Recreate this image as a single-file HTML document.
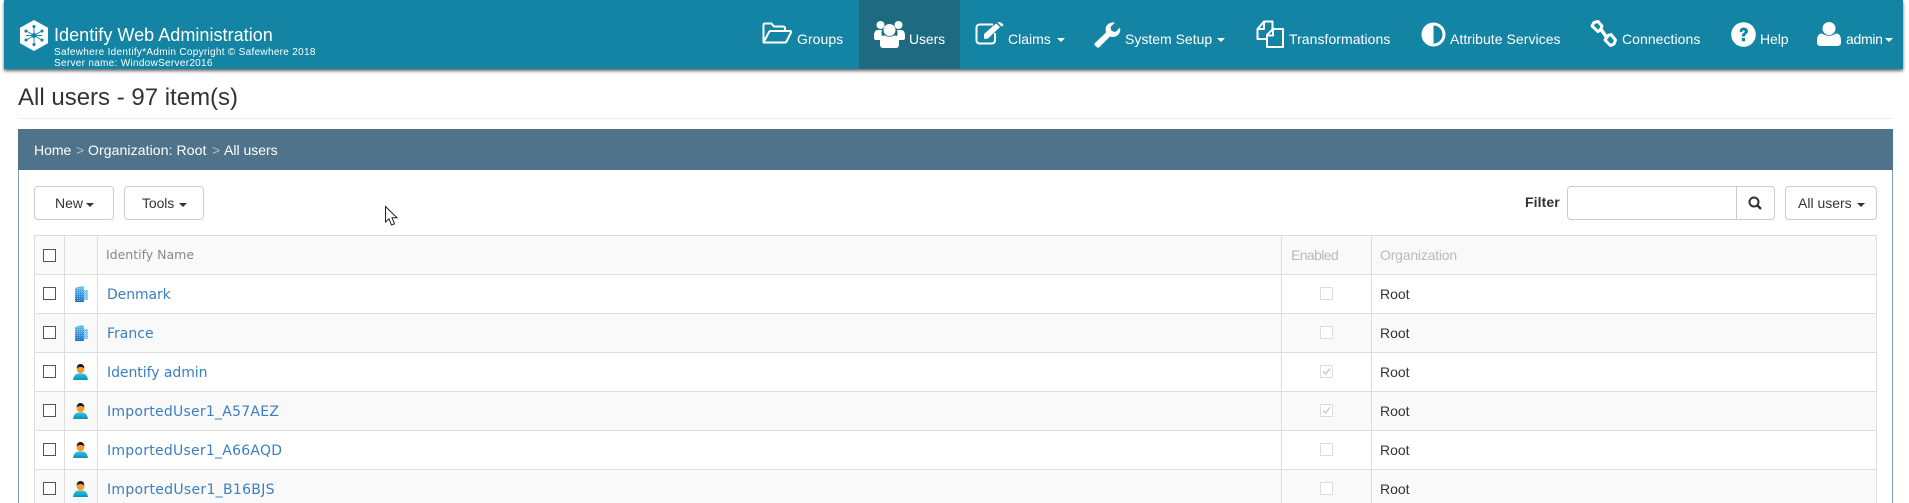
<!DOCTYPE html>
<html><head><meta charset="utf-8"><style>
html,body{margin:0;padding:0;background:#fff;width:1909px;height:503px;overflow:hidden;font-family:"Liberation Sans",Arial,sans-serif;color:#333}
.a{position:absolute;white-space:nowrap}
#nav{position:absolute;left:4px;top:0;width:1899px;height:69px;background:#1384a3;box-shadow:0 2px 3px rgba(0,0,0,.6)}
.n{position:absolute;top:30px;font-size:14px;line-height:18px;color:#fff;white-space:nowrap}
.ic{position:absolute;overflow:visible}
.car{position:absolute;width:0;height:0;border-left:4px solid transparent;border-right:4px solid transparent;border-top:4px solid currentColor}
.btn{position:absolute;box-sizing:border-box;border:1px solid #ccc;border-radius:4px;background:#fff;height:34px;top:186px}
.line{position:absolute;background:#ddd}
.cb{position:absolute;box-sizing:border-box;width:13px;height:13px;border:1px solid #555;background:#fff}
.cd{position:absolute;box-sizing:border-box;width:13px;height:13px;border:1px solid #ddd;background:#fff}
.lk{position:absolute;left:107px;font:14px/18px "DejaVu Sans",Verdana,sans-serif;letter-spacing:.25px;color:#3a7fc1;white-space:nowrap}
.rt{position:absolute;left:1380px;font-size:14px;line-height:18px;color:#333}
</style></head><body>
<div id="nav"></div>
<svg class="ic" style="left:19px;top:20px" width="30" height="31" viewBox="0 0 30 31"><path d="M15 0.5L28.5 8V23L15 30.5L1.5 23V8Z" fill="#fff" stroke="#fff" stroke-linejoin="round"/><g stroke="#1384a3" stroke-width="1.1" fill="#1384a3"><path d="M15 6V25M6.5 10.5L23.5 20.5M6.5 20.5L23.5 10.5M7 15.5H23" fill="none" stroke-width=".9"/><circle cx="15" cy="15.5" r="2"/><circle cx="15" cy="6.5" r="1"/><circle cx="15" cy="24.5" r="1"/><circle cx="7" cy="11" r="1"/><circle cx="23" cy="11" r="1"/><circle cx="7" cy="20" r="1"/><circle cx="23" cy="20" r="1"/></g></svg>
<div class="a" style="left:54px;top:24px;font-size:18px;line-height:22px;color:#fff;letter-spacing:.04px">Identify Web Administration</div>
<div class="a" style="left:54px;top:47px;font-size:10px;line-height:11px;color:#fff;letter-spacing:.3px">Safewhere Identify*Admin Copyright © Safewhere 2018<br>Server name: WindowServer2016</div>

<div class="a" style="left:859px;top:0;width:101px;height:69px;background:#1e6a80"></div>

<svg class="ic" style="left:762px;top:22px" width="30" height="22" viewBox="0 0 30 22" fill="none" stroke="#fff" stroke-width="2" stroke-linejoin="round"><path d="M1.5 20V3Q1.5 1.5 3 1.5H9.5L12 4.5H21Q23 4.5 23 6.5V9"/><path d="M1.5 20.5L7 10Q7.5 9 9 9H28Q29.5 9 29 10.5L24.5 19.5Q24 20.5 23 20.5Z"/></svg>
<div class="n" style="left:797px;letter-spacing:.05px">Groups</div>

<svg class="ic" style="left:874px;top:20px" width="31" height="28" viewBox="0 0 31 28" fill="#fff"><circle cx="6.5" cy="5" r="4"/><circle cx="24.5" cy="5" r="4"/><path d="M0 16Q0 10 4 10H8Q7 13 8 16L7.5 20H2Q0 20 0 18Z"/><path d="M31 16Q31 10 27 10H23Q24 13 23 16L23.5 20H29Q31 20 31 18Z"/><circle cx="15.5" cy="10" r="6"/><path d="M6 22Q6 15 11 15.5Q15.500 18 20 15.500Q25 15 25 22V24.500Q25 28 22 28H9Q6 28 6 24.500Z"/></svg>
<div class="n" style="left:909px;letter-spacing:-.1px">Users</div>

<svg class="ic" style="left:975px;top:22px" width="29" height="23" viewBox="0 0 29 23"><path d="M20 11V18Q20 21.500 16.500 21.500H5Q1.500 21.500 1.500 18V6Q1.500 2.500 5 2.500H18" fill="none" stroke="#fff" stroke-width="2"/><path d="M9 12L21 1.500L25 5L13 16.500L9 17Z" fill="#fff"/><path d="M22.500 .5L24 0Q28 1 28.500 3.500L26.500 4.500Z" fill="#fff"/></svg>
<div class="n" style="left:1008px">Claims</div><div class="car" style="left:1057px;top:38px;color:#fff"></div>

<svg class="ic" style="left:1094px;top:22px" width="27" height="26" viewBox="0 0 27 26" fill="#fff"><path d="M1 21L12 10.500Q10.500 4 15 1.500Q18 0 21 .5L16.500 5L17.500 9L21.500 10L26 5.500Q27 9 24.500 12.500Q21 16 16 14.500L5 25.500Q3.500 26 2 24.500L.5 23Q0 22 1 21Z"/></svg>
<div class="n" style="left:1125px">System Setup</div><div class="car" style="left:1217px;top:38px;color:#fff"></div>

<svg class="ic" style="left:1256px;top:20px" width="28" height="28" viewBox="0 0 28 28" fill="none" stroke="#fff" stroke-width="2" stroke-linejoin="round"><path d="M10 19H1.500V9L8 1.500H16.500V9"/><path d="M8 2V9H2"/><path d="M11 27V15L17 9H27V27Z"/><path d="M17 9.500V15.500H11.500"/></svg>
<div class="n" style="left:1289px;letter-spacing:.05px">Transformations</div>

<svg class="ic" style="left:1421px;top:22px" width="25" height="25" viewBox="0 0 25 25"><circle cx="12.500" cy="12.500" r="12" fill="#fff"/><path d="M12.500 3.500A9 9 0 0 1 12.500 21.500Z" fill="#1384a3"/></svg>
<div class="n" style="left:1450px;letter-spacing:.05px">Attribute Services</div>

<svg class="ic" style="left:1590px;top:20px" width="27" height="27" viewBox="0 0 27 27" fill="none" stroke="#fff" stroke-width="3"><path d="M4 2.500L8 1.500L12 6L10.500 10L8 11.500L2 6Z" stroke-linejoin="round"/><path d="M18 15.500L21 14.500L25.500 20L24 24L20.500 25.500L15 20Z" stroke-linejoin="round"/><path d="M10 8L17.500 18.500" stroke-width="3.500"/></svg>
<div class="n" style="left:1622px;letter-spacing:.05px">Connections</div>

<svg class="ic" style="left:1731px;top:22px" width="25" height="25" viewBox="0 0 25 25"><circle cx="12.500" cy="12.500" r="12.300" fill="#fff"/><path d="M8.500 9.500Q9 5.500 12.800 5.500Q17 5.800 17 9.300Q17 11.300 14.800 12.500Q14 13 14 14.500H10.800Q10.800 11.800 12.800 10.800Q13.800 10.300 13.700 9.300Q13.300 8.300 12.500 8.400Q11.500 8.500 11 10.500Z" fill="#1384a3"/><rect x="10.800" y="16" width="3.200" height="3.300" fill="#1384a3"/></svg>
<div class="n" style="left:1760px;letter-spacing:-.1px">Help</div>

<svg class="ic" style="left:1817px;top:22px" width="24" height="24" viewBox="0 0 24 24" fill="#fff"><circle cx="12" cy="6.500" r="6.500"/><path d="M0 19Q0 11.500 5 11.500Q12 16 19 11.500Q24 11.500 24 19V20.500Q24 24 20.500 24H3.500Q0 24 0 20.500Z"/></svg>
<div class="n" style="left:1846px;letter-spacing:-.3px">admin</div><div class="car" style="left:1885px;top:38px;color:#fff"></div>

<div class="a" style="left:18px;top:84px;font-size:24px;line-height:28px;color:#333">All users - 97 item(s)</div>
<div class="a" style="left:18px;top:118px;width:1875px;height:1px;background:#eee"></div>

<div class="a" style="left:18px;top:129px;width:1875px;height:374px;box-sizing:border-box;border:1px solid #7e9bb0;border-bottom:0;background:#fff"></div>
<div class="a" style="left:18px;top:129px;width:1875px;height:41px;background:#4f738a"></div>
<div class="a" style="left:34px;top:141px;font-size:14px;line-height:18px;color:#fff">Home</div>
<div class="a" style="left:76px;top:141px;font-size:14px;line-height:18px;color:#bbb">&gt;</div>
<div class="a" style="left:88px;top:141px;font-size:14px;line-height:18px;color:#fff;letter-spacing:.1px">Organization: Root</div>
<div class="a" style="left:212px;top:141px;font-size:14px;line-height:18px;color:#bbb">&gt;</div>
<div class="a" style="left:224px;top:141px;font-size:14px;line-height:18px;color:#fff">All users</div>

<div class="btn" style="left:34px;width:80px"></div>
<div class="a" style="left:55px;top:194px;font-size:14px;line-height:18px">New</div><div class="car" style="left:86px;top:203px;color:#333"></div>
<div class="btn" style="left:124px;width:80px"></div>
<div class="a" style="left:142px;top:194px;font-size:14px;line-height:18px;letter-spacing:-.1px">Tools</div><div class="car" style="left:179px;top:203px;color:#333"></div>

<svg class="ic" style="left:385px;top:206px" width="13" height="20" viewBox="0 0 13 20"><path d="M.5.500V16L4 12.800L6.500 19L9.500 17.800L7 11.800H12Z" fill="#fff" stroke="#222" stroke-width="1"/></svg>

<div class="a" style="left:1525px;top:193px;font-size:14px;line-height:18px;font-weight:bold;letter-spacing:.1px">Filter</div>
<div class="btn" style="left:1567px;width:208px"></div>
<div class="a" style="left:1736px;top:187px;width:1px;height:32px;background:#ccc"></div>
<svg class="ic" style="left:1748px;top:196px" width="14" height="14" viewBox="0 0 14 14" fill="none" stroke="#333" stroke-width="2"><circle cx="6" cy="6" r="4.500"/><path d="M9.500 9.500L13 13" stroke-width="2.500"/></svg>
<div class="btn" style="left:1785px;width:92px"></div>
<div class="a" style="left:1798px;top:194px;font-size:14px;line-height:18px">All users</div><div class="car" style="left:1857px;top:203px;color:#333"></div>

<!-- table backgrounds -->
<div class="a" style="left:34px;top:235px;width:1843px;height:39px;background:#f9f9f9"></div>
<div class="a" style="left:34px;top:313px;width:1843px;height:39px;background:#f9f9f9"></div>
<div class="a" style="left:34px;top:391px;width:1843px;height:39px;background:#f9f9f9"></div>
<div class="a" style="left:34px;top:469px;width:1843px;height:34px;background:#f9f9f9"></div>
<!-- horizontal lines -->
<div class="line" style="left:34px;top:235px;width:1843px;height:1px"></div>
<div class="line" style="left:34px;top:274px;width:1843px;height:1px"></div>
<div class="line" style="left:34px;top:313px;width:1843px;height:1px"></div>
<div class="line" style="left:34px;top:352px;width:1843px;height:1px"></div>
<div class="line" style="left:34px;top:391px;width:1843px;height:1px"></div>
<div class="line" style="left:34px;top:430px;width:1843px;height:1px"></div>
<div class="line" style="left:34px;top:469px;width:1843px;height:1px"></div>
<!-- vertical lines -->
<div class="line" style="left:34px;top:235px;width:1px;height:268px"></div>
<div class="line" style="left:64px;top:235px;width:1px;height:268px"></div>
<div class="line" style="left:97px;top:235px;width:1px;height:268px"></div>
<div class="line" style="left:1281px;top:235px;width:1px;height:268px"></div>
<div class="line" style="left:1371px;top:235px;width:1px;height:268px"></div>
<div class="line" style="left:1876px;top:235px;width:1px;height:268px"></div>

<div class="a" style="left:106px;top:246px;font:12.500px/18px 'DejaVu Sans',Verdana,sans-serif;color:#888">Identify Name</div>
<div class="a" style="left:1291px;top:246px;font-size:14px;line-height:18px;color:#bbb;letter-spacing:-.6px">Enabled</div>
<div class="a" style="left:1380px;top:246px;font-size:14px;line-height:18px;color:#bbb;letter-spacing:-.2px">Organization</div>

<div class="cb" style="left:43px;top:249px"></div>
<div class="cb" style="left:43px;top:287px"></div>
<div class="cb" style="left:43px;top:326px"></div>
<div class="cb" style="left:43px;top:365px"></div>
<div class="cb" style="left:43px;top:404px"></div>
<div class="cb" style="left:43px;top:443px"></div>
<div class="cb" style="left:43px;top:482px"></div>

<svg width="0" height="0" style="position:absolute"><defs>
<linearGradient id="b1" x1="0" y1="0" x2="0" y2="1"><stop offset="0" stop-color="#6cc0f0"/><stop offset="1" stop-color="#1a6fc0"/></linearGradient>
<linearGradient id="p1" x1="0" y1="0" x2="0" y2="1"><stop offset="0" stop-color="#35c4e0"/><stop offset="1" stop-color="#0a90b8"/></linearGradient>
<pattern id="w1" width="2" height="2" patternUnits="userSpaceOnUse"><rect width="2" height="2" fill="none"/><rect width="1" height="1" fill="#fff" fill-opacity=".35"/></pattern>
<g id="bld"><path d="M8 4H13V14H8Z" fill="#7cc8f2"/><path d="M8 4H13V14H8Z" fill="url(#w1)"/><path d="M0 2L7 0L9 1V16H0Z" fill="url(#b1)"/><path d="M0 2L7 0L9 1V16H0Z" fill="url(#w1)"/></g>
<g id="usr"><path d="M0 16Q1 10 5 9.500H10Q14 10 15 16Z" fill="url(#p1)"/><circle cx="7.500" cy="5.500" r="3.800" fill="#f59a2c"/><path d="M3.500 4.500Q4 0 7.500 0Q11 0 11.500 4.500Q9 2.500 7 3Q5 3 3.500 4.500Z" fill="#1a1a1a"/></g>
</defs></svg>
<svg class="ic" style="left:75px;top:286px" width="13" height="16"><use href="#bld"/></svg>
<svg class="ic" style="left:75px;top:325px" width="13" height="16"><use href="#bld"/></svg>
<svg class="ic" style="left:73px;top:364px" width="15" height="16"><use href="#usr"/></svg>
<svg class="ic" style="left:73px;top:403px" width="15" height="16"><use href="#usr"/></svg>
<svg class="ic" style="left:73px;top:442px" width="15" height="16"><use href="#usr"/></svg>
<svg class="ic" style="left:73px;top:481px" width="15" height="16"><use href="#usr"/></svg>

<div class="lk" style="top:286px;left:107px;letter-spacing:-.1px">Denmark</div>
<div class="lk" style="top:325px;left:107px;letter-spacing:0">France</div>
<div class="lk" style="top:364px;letter-spacing:-.05px">Identify admin</div>
<div class="lk" style="top:403px">ImportedUser1_A57AEZ</div>
<div class="lk" style="top:442px">ImportedUser1_A66AQD</div>
<div class="lk" style="top:481px;letter-spacing:.3px">ImportedUser1_B16BJS</div>

<div class="cd" style="left:1320px;top:287px"></div>
<div class="cd" style="left:1320px;top:326px"></div>
<div class="cd" style="left:1320px;top:365px"></div>
<div class="cd" style="left:1320px;top:404px"></div>
<div class="cd" style="left:1320px;top:443px"></div>
<div class="cd" style="left:1320px;top:482px"></div>
<svg class="ic" style="left:1320px;top:365px" width="13" height="13" fill="none" stroke="#ccc" stroke-width="1.500"><path d="M3 6.500L5.500 9L10 3.500"/></svg>
<svg class="ic" style="left:1320px;top:404px" width="13" height="13" fill="none" stroke="#ccc" stroke-width="1.500"><path d="M3 6.500L5.500 9L10 3.500"/></svg>

<div class="rt" style="top:285px">Root</div>
<div class="rt" style="top:324px">Root</div>
<div class="rt" style="top:363px">Root</div>
<div class="rt" style="top:402px">Root</div>
<div class="rt" style="top:441px">Root</div>
<div class="rt" style="top:480px">Root</div>
</body></html>
